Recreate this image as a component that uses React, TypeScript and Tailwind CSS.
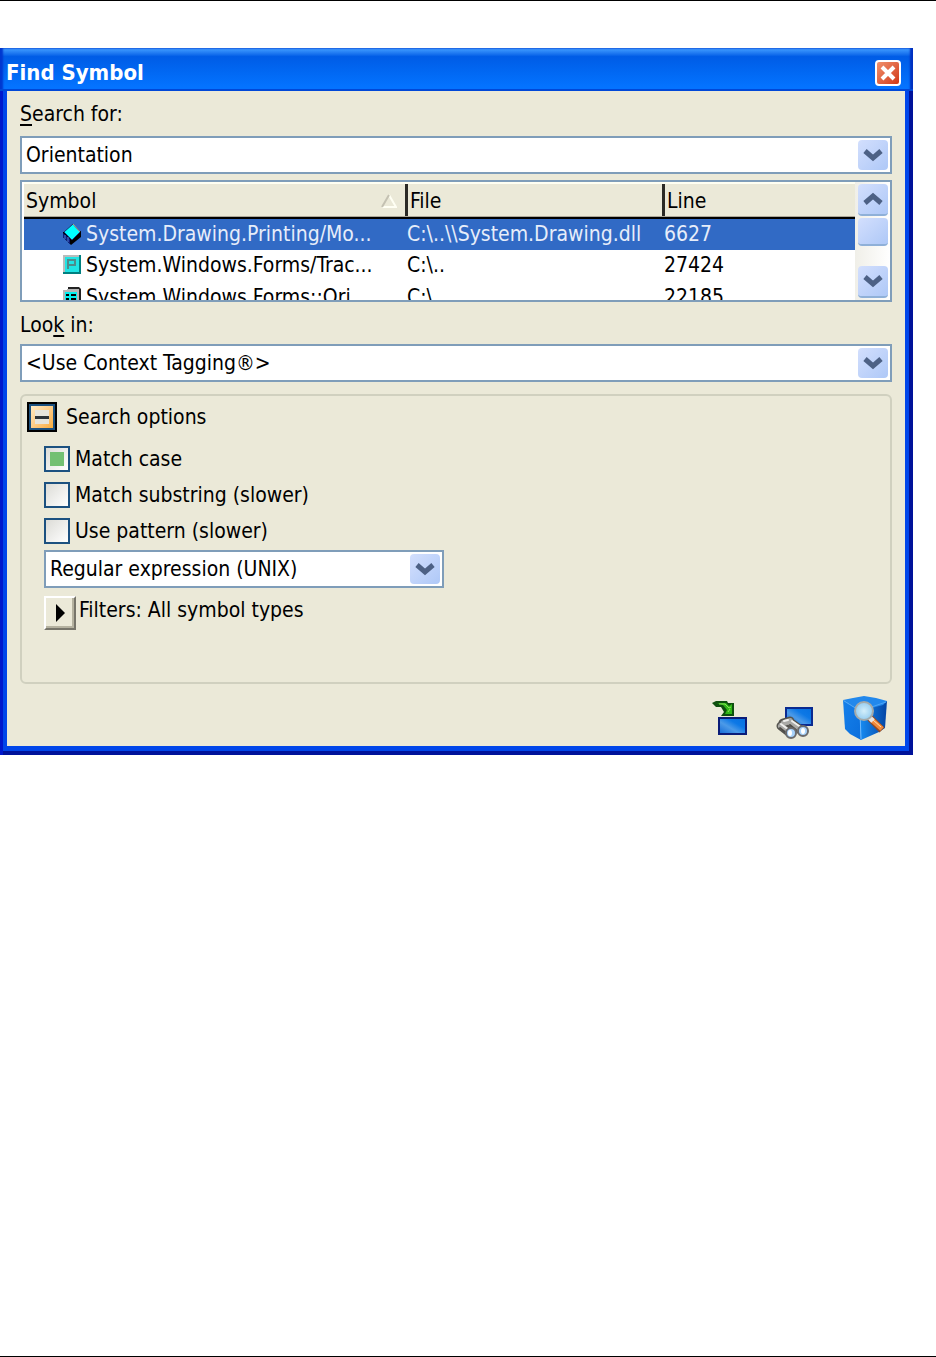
import React, { useState } from 'react';
import { clsx } from 'clsx';

const columns = ['Symbol', 'File', 'Line'];

const results = [
  { icon: MethodIcon, symbol: 'System.Drawing.Printing/Mo...', file: 'C:\\..\\\\System.Drawing.dll', line: '6627' },
  { icon: PropertyIcon, symbol: 'System.Windows.Forms/Trac...', file: 'C:\\..', line: '27424' },
  { icon: EnumIcon, symbol: 'System.Windows.Forms::Ori...', file: 'C:\\..', line: '22185' },
];

const options = [
  { id: 'match-case', label: 'Match case', checked: true },
  { id: 'match-substring', label: 'Match substring (slower)', checked: false },
  { id: 'use-pattern', label: 'Use pattern (slower)', checked: false },
];

function MethodIcon() {
  return (
    <svg width="20" height="22" viewBox="0 0 20 22" aria-hidden="true" className="shrink-0">
      <path d="M1 9v5l8 8 10-8V8z" fill="#000" />
      <path d="M1 10v4l7 7v-5z" fill="#0a1a80" />
      <path d="M3 12v4M6 14v5" stroke="#4d7fd0" strokeWidth="1" />
      <path d="M11 1l7 8-8 8-8-8z" fill="#00ffff" stroke="#123a7a" strokeWidth="1" />
      <path d="M11 1l7 8" stroke="#b8a88c" strokeWidth="1" />
    </svg>
  );
}

function PropertyIcon() {
  return (
    <svg width="20" height="22" viewBox="0 0 20 22" aria-hidden="true" className="shrink-0">
      <path d="M1 1h18v19H1z" fill="#b8bcbc" />
      <path d="M17 1h2v19H1v-2h16z" fill="#008080" />
      <path d="M3 3h14v15H3z" fill="#20e4e4" />
      <path d="M6 15V6h7v5H7" fill="none" stroke="#4d8c8c" strokeWidth="2" />
    </svg>
  );
}

function EnumIcon() {
  return (
    <svg width="20" height="22" viewBox="0 0 20 22" aria-hidden="true" className="shrink-0">
      <path d="M6 1h11l2 2v17H6z" fill="#222" />
      <path d="M1 4h4V3h12v18H1z" fill="#b5b5b5" />
      <path d="M3 6h12v14H3z" fill="#00f0f0" />
      <path d="M4 9h3M9 9h5M4 13h3M9 13h5M4 17h3M9 17h5" stroke="#000" strokeWidth="2" />
    </svg>
  );
}

function Chevron({ up = false }: { up?: boolean }) {
  return (
    <svg width="20" height="14" viewBox="0 0 20 14" aria-hidden="true" className={clsx(up && 'rotate-180')}>
      <path d="M2 3l8 7 8-7" fill="none" stroke="#4d6185" strokeWidth="5" />
    </svg>
  );
}

const blueFace = 'flex items-center justify-center rounded-sm bg-linear-to-br from-[#d3dffd] to-[#aec8f7]';

function DropDown({ id, label, options }: { id: string; label?: string; options: string[] }) {
  return (
    <div className="relative h-[38px] border-2 border-[#7f9db9] bg-white">
      <select id={id} aria-label={label} className="h-full w-full appearance-none bg-transparent pr-9 pl-1 outline-none">
        {options.map((option) => (
          <option key={option}>{option}</option>
        ))}
      </select>
      <span className={clsx(blueFace, 'pointer-events-none absolute top-0.5 right-0.5 size-[30px]')}>
        <Chevron />
      </span>
    </div>
  );
}

function ResultList() {
  const [selected, setSelected] = useState(0);

  return (
    <div className="mt-1.5 flex h-[122px] border-2 border-[#7f9db9] bg-white">
      <div className="min-w-0 flex-1 overflow-hidden pl-0.5">
        <table className="w-full table-fixed border-collapse text-left">
          <colgroup>
            <col className="w-[381px]" />
            <col className="w-[257px]" />
            <col />
          </colgroup>
          <thead>
            <tr className="h-9 border-b-2 border-black bg-[#ebe9d8] shadow-[inset_0_2px_0_#fffff2,inset_0_-2px_0_#aca899]">
              {columns.map((name, i) => (
                <th key={name} scope="col" className="p-0 font-normal">
                  <div className={clsx('flex h-8 items-center justify-between pt-0.5 pr-2 pl-0.5', i > 0 && 'border-l-3 border-[#2b2a26]')}>
                    {name}
                    {i === 0 && (
                      <svg width="16" height="14" viewBox="0 0 16 14" aria-hidden="true">
                        <path d="M8 1l7 12H1" fill="none" stroke="#fffff4" strokeWidth="2" />
                        <path d="M1 13L8 1" stroke="#c4c1b2" strokeWidth="2" />
                      </svg>
                    )}
                  </div>
                </th>
              ))}
            </tr>
          </thead>
          <tbody>
            {results.map((row, i) => (
              <tr
                key={row.symbol}
                onClick={() => setSelected(i)}
                className={clsx('h-8 whitespace-nowrap', i === selected && 'bg-[#316ac5] text-[#e6edfa]')}
              >
                <td className="p-0 pb-0.5">
                  <div className="flex items-center gap-1 pl-[38px]">
                    <row.icon />
                    {row.symbol}
                  </div>
                </td>
                <td className="p-0 pb-0.5 pl-0.5">{row.file}</td>
                <td className="p-0 pb-0.5 pl-0.5">{row.line}</td>
              </tr>
            ))}
          </tbody>
        </table>
      </div>
      <div className="flex w-[35px] flex-col items-center bg-linear-to-r from-[#f0efe8] to-white pt-0.5">
        <button type="button" aria-label="Scroll up" className={clsx(blueFace, 'h-8 w-[30px] border-b-2 border-[#8fb0d8]')}>
          <Chevron up />
        </button>
        <span className={clsx(blueFace, 'mt-0.5 h-7 w-[30px] border-b-2 border-[#8fb0d8]')} />
        <button type="button" aria-label="Scroll down" className={clsx(blueFace, 'mt-auto mb-0.5 h-8 w-[30px] border-b-2 border-[#8fb0d8]')}>
          <Chevron />
        </button>
      </div>
    </div>
  );
}

function SearchOptions() {
  const [open, setOpen] = useState(true);

  return (
    <section className="mt-3 min-h-[290px] rounded-md border-2 border-[#d0d0bf] pt-1.5 pl-[5px]">
      <div className="flex items-center gap-[9px]">
        <button
          type="button"
          aria-label="Toggle search options"
          onClick={() => setOpen(!open)}
          className="flex size-[30px] items-center justify-center border-2 border-black bg-linear-to-br from-[#fff0cf] to-[#f9a61a] shadow-[inset_0_0_0_2px_#1c5180]"
        >
          <span className="flex size-3.5 items-center bg-[#e7e5dc]">
            <span className="h-[3px] w-full bg-[#2d3338]" />
          </span>
        </button>
        <h2>Search options</h2>
      </div>
      {open && (
        <div className="pt-[9px] pl-[17px]">
          {options.map(({ id, label, checked }) => (
            <div key={id} className="flex h-9 items-center gap-[5px]">
              <input
                id={id}
                type="checkbox"
                defaultChecked={checked}
                className="size-[26px] shrink-0 appearance-none border-2 border-[#1c5180] bg-linear-to-br from-[#dcdcd7] to-white checked:before:m-1 checked:before:block checked:before:size-3.5 checked:before:bg-[#73c073]"
              />
              <label htmlFor={id}>{label}</label>
            </div>
          ))}
          <div className="mt-px w-[400px] max-w-full">
            <DropDown id="pattern-type" label="Pattern type" options={['Regular expression (UNIX)', 'Wildcards']} />
          </div>
          <div className="mt-2 flex items-start gap-[3px]">
            <button
              type="button"
              aria-label="Edit filters"
              className="flex h-[34px] w-8 items-center justify-center border-2 border-t-white border-r-[#77756a] border-b-[#77756a] border-l-white shadow-[inset_-2px_-2px_0_#b5b2a0]"
            >
              <svg width="9" height="18" viewBox="0 0 9 18" aria-hidden="true">
                <path d="M0 0l9 9-9 9z" fill="#000" />
              </svg>
            </button>
            <span className="leading-7">Filters: All symbol types</span>
          </div>
        </div>
      )}
    </section>
  );
}

function GoToIcon() {
  return (
    <svg width="36" height="36" viewBox="0 0 36 36" aria-hidden="true">
      <defs>
        <linearGradient id="screen" x1="0" y1="1" x2="1" y2="0">
          <stop offset="0" stopColor="#1268d4" />
          <stop offset=".4" stopColor="#4c9ae8" />
          <stop offset=".65" stopColor="#0d78e6" />
          <stop offset="1" stopColor="#0570e0" />
        </linearGradient>
      </defs>
      <path d="M0 3l4-2h11l1 2h6v13H9l3-4-3-5H4z" fill="#0e4f0e" />
      <path d="M5 3h9l3 3 3-2v10h-7l2-4-4-5z" fill="#2fb516" />
      <path d="M7 4h6l4 4 2-1M16 12l2-3" fill="none" stroke="#86e455" strokeWidth="1" />
      <path d="M7 18h27v16H7z" fill="url(#screen)" stroke="#0a1c78" strokeWidth="2" />
    </svg>
  );
}

function BrowseIcon() {
  return (
    <svg width="38" height="34" viewBox="0 0 38 34" aria-hidden="true">
      <path d="M10 2h26v17H10z" fill="url(#screen)" stroke="#0a2a90" strokeWidth="2" />
      <g fill="none" strokeLinecap="round">
        <path d="M5 20l9 7M15 17l11 8M7 17l7-2" stroke="#55544f" strokeWidth="9" />
        <path d="M5 20l9 7M15 17l11 8M8 17l6-2" stroke="#a9a9a6" strokeWidth="6" />
        <path d="M5 18l8 6M16 15l10 7M8 15l4-1" stroke="#efefed" strokeWidth="2" />
        <path d="M4 22l5 4M14 19l6 5" stroke="#4e4c48" strokeWidth="2" />
      </g>
      <ellipse cx="15" cy="27" rx="5" ry="5" fill="#a8d2fa" stroke="#6a6a6c" strokeWidth="2" />
      <ellipse cx="27" cy="25" rx="5" ry="5" fill="#a8d2fa" stroke="#6a6a6c" strokeWidth="2" />
      <ellipse cx="14" cy="27" rx="2" ry="3" fill="#fff" />
      <ellipse cx="27" cy="25" rx="2" ry="3" fill="#fff" />
    </svg>
  );
}

function FindIcon() {
  return (
    <svg width="46" height="46" viewBox="0 0 46 46" aria-hidden="true">
      <defs>
        <linearGradient id="cube-left" x1="0" y1="0" x2="1" y2="1">
          <stop offset="0" stopColor="#1580ea" />
          <stop offset="1" stopColor="#0b6edc" />
        </linearGradient>
        <linearGradient id="cube-right" x1="0" y1="0" x2="1" y2="0">
          <stop offset="0" stopColor="#178cf2" />
          <stop offset="1" stopColor="#0444a4" />
        </linearGradient>
        <radialGradient id="lens">
          <stop offset="0" stopColor="#d4effb" />
          <stop offset="1" stopColor="#96cdf0" />
        </radialGradient>
      </defs>
      <path d="M1 5l17 11 1 29L8 39l-5-5z" fill="url(#cube-left)" />
      <path d="M18 16l27-10-2 27-6 4-18 8z" fill="url(#cube-right)" />
      <path d="M1 5l10-2 11-2 12 2 11 3-4 4-23 6z" fill="#2288ec" />
      <path d="M2 6l16 10 26-9" fill="none" stroke="#4ca6f8" strokeWidth="1" />
      <path d="M18 17l1 27" stroke="#6cbaff" strokeWidth="1" />
      <path d="M28 23l12 12" stroke="#8e4a26" strokeWidth="7" />
      <path d="M30 25l10 9" stroke="#f28a3c" strokeWidth="5" />
      <path d="M31 25l8 7" stroke="#ffe0b0" strokeWidth="1" />
      <path d="M27 22l4 4" stroke="#e5e5e5" strokeWidth="5" />
      <circle cx="22" cy="16" r="9" fill="url(#lens)" stroke="#a4aaaa" strokeWidth="2" />
    </svg>
  );
}

export default function App() {
  return (
    <div className="flex min-h-screen flex-col border-y border-black bg-white font-['DejaVu_Sans_Condensed','DejaVu_Sans',sans-serif] text-[21px] leading-6 text-black">
      <main className="mt-[47px] mr-[23px]">
        <header className="flex h-[43px] items-center justify-between bg-linear-to-b from-[#3f9bff] from-2% via-[#005ce6] via-20% to-[#0473ff] to-90% pt-1.5 pr-3 pl-1.5 shadow-[inset_0_-2px_0_#0048d8,inset_-3px_0_2px_#0030c0,inset_3px_0_2px_#0038d0]">
          <h1 className="text-[22px] font-bold text-white">Find Symbol</h1>
          <button
            type="button"
            aria-label="Close"
            className="flex size-[26px] items-center justify-center rounded-sm border-2 border-white bg-linear-to-br from-[#f0906c] to-[#d03410]"
          >
            <svg width="16" height="16" viewBox="0 0 16 16" aria-hidden="true">
              <path d="M2 2l12 12M14 2L2 14" stroke="#fff" strokeWidth="4" />
            </svg>
          </button>
        </header>

        <div className="bg-[#0046ea] pr-2 pb-[9px] pl-[7px] shadow-[inset_3px_0_0_#0018cc,inset_-4px_0_0_#00129a,inset_0_-4px_0_#00129a]">
          <form className="bg-[#ebe9d8] px-[13px]" onSubmit={(e) => e.preventDefault()}>
            <label htmlFor="search-for" className="flex h-[45px] items-center">
              <u className="underline-offset-3">S</u>earch for:
            </label>
            <div className="flex h-[38px] border-2 border-[#7f9db9] bg-white p-0.5">
              <input id="search-for" type="text" defaultValue="Orientation" className="min-w-0 flex-1 bg-transparent pl-0.5 outline-none" />
              <button type="button" aria-label="Previous searches" className={clsx(blueFace, 'size-[30px]')}>
                <Chevron />
              </button>
            </div>

            <ResultList />

            <label htmlFor="look-in" className="flex h-[42px] items-center pt-1 whitespace-pre">
              Loo<u className="underline-offset-3">k</u> in:
            </label>
            <DropDown id="look-in" options={['<Use Context Tagging®>', 'Solution', 'All files']} />

            <SearchOptions />

            <div className="flex h-[62px] items-center justify-end gap-7 pt-1.5 pr-1">
              <button type="button" aria-label="Go to symbol">
                <GoToIcon />
              </button>
              <button type="button" aria-label="Browse symbol" className="pt-2.5">
                <BrowseIcon />
              </button>
              <button type="submit" aria-label="Find">
                <FindIcon />
              </button>
            </div>
          </form>
        </div>
      </main>
    </div>
  );
}
